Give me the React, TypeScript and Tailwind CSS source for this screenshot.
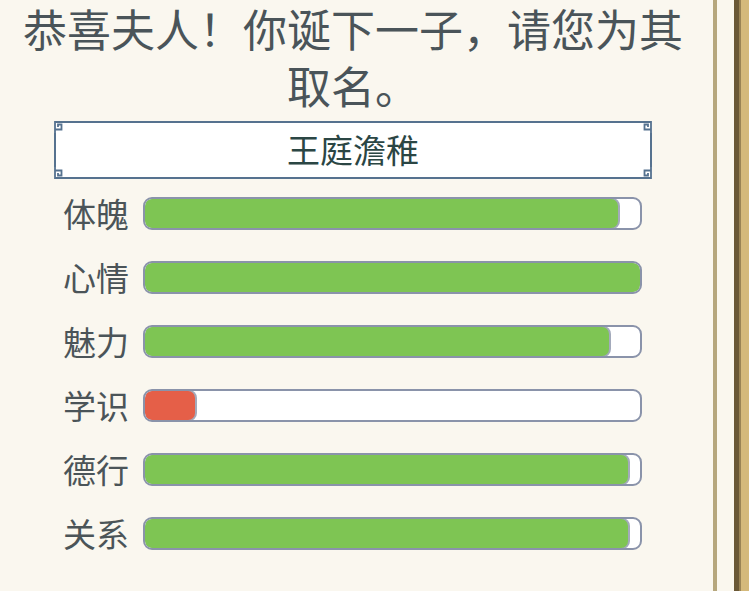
import type { ReactNode } from "react";

interface Stat {
  label: string;
  value: number;
  color: string;
}

const stats: Stat[] = [
  { label: "体魄", value: 95.5, color: "bg-[#7ec553]" },
  { label: "心情", value: 100, color: "bg-[#7ec553]" },
  { label: "魅力", value: 93.8, color: "bg-[#7ec553]" },
  { label: "学识", value: 10, color: "bg-[#e55f48]" },
  { label: "德行", value: 97.6, color: "bg-[#7ec553]" },
  { label: "关系", value: 97.6, color: "bg-[#7ec553]" },
];

// little fret hook that sits on each corner of the name frame
function CornerHook({ className }: { className: string }) {
  return (
    <svg
      width="12"
      height="12"
      viewBox="0 0 12 12"
      className={`absolute ${className}`}
      fill="none"
      stroke="#56728f"
      strokeWidth="1.8"
    >
      <rect x="0" y="0" width="12" height="12" fill="#ffffff" stroke="none" />
      <path d="M12 1 H1 V12" />
      <path d="M1 8.5 H7.5 V3.5 H4 V6" />
    </svg>
  );
}

function NameFrame({ children }: { children: ReactNode }) {
  return (
    <div className="relative mx-auto h-[58px] w-[598px] border-2 border-[#56728f] bg-white flex items-center justify-center">
      <CornerHook className="-left-[2px] -top-[2px]" />
      <CornerHook className="-right-[2px] -top-[2px] -scale-x-100" />
      <CornerHook className="-left-[2px] -bottom-[2px] -scale-y-100" />
      <CornerHook className="-right-[2px] -bottom-[2px] -scale-100" />
      <span className="-mt-[2px] text-[33px] leading-none text-[#2b4644]">{children}</span>
    </div>
  );
}

function StatRow({ stat }: { stat: Stat }) {
  return (
    <div className="flex h-[64px] items-center gap-[13px]">
      <span className="-ml-[1px] w-[67px] text-[33px] leading-none text-[#4b5458]">{stat.label}</span>
      <div className="h-[33px] flex-1 rounded-[9px] border-2 border-[#8a93aa] bg-white overflow-hidden">
        <div
          className={`h-full rounded-[7px] ${stat.color} shadow-[1px_0_0_1px_#a3aabb]`}
          style={{ width: `${stat.value}%` }}
        />
      </div>
    </div>
  );
}

export default function App() {
  return (
    <div
      className="flex h-[591px] w-[749px] overflow-hidden bg-[#faf7ef]"
      style={{ fontFamily: '"Noto Sans CJK SC", "Noto Sans", sans-serif' }}
    >
      <main className="w-[713px] pr-[7px]">
        <h1 className="mx-auto w-[690px] text-center text-[44px] leading-[57px] font-normal text-[#4a5459]">
          恭喜夫人！你诞下一子，请您为其取名。
        </h1>
        <div className="mt-[7px] mb-[2px]">
          <NameFrame>王庭澹稚</NameFrame>
        </div>
        <div className="mx-auto w-[578px]">
          {stats.map((s) => (
            <StatRow key={s.label} stat={s} />
          ))}
        </div>
      </main>
      <div className="w-[4px] bg-[#b6a77d]" />
      <div className="w-[17px] bg-[#faf7ee]" />
      <div className="flex-1 bg-[linear-gradient(to_right,#6a5836_0,#6a5836_5px,#9a8455_5px,#9a8455_7px,#d4b97b_7px)]" />
    </div>
  );
}
